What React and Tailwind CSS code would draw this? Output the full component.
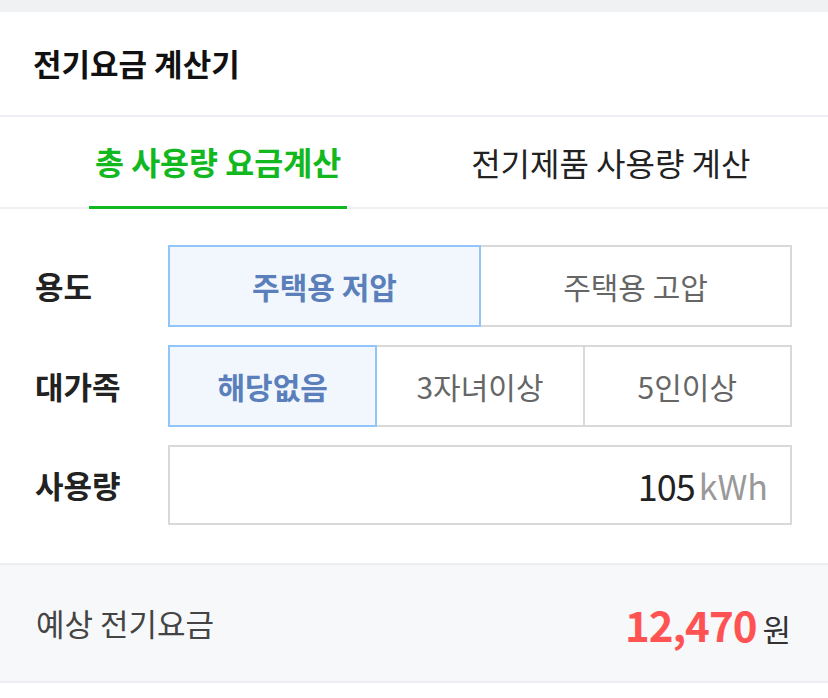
import { useState } from 'react';

const font = { fontFamily: '"Noto Sans CJK KR", "Noto Sans", sans-serif' };

function Segment({ options, value, onChange }) {
  return (
    <div className="flex flex-1">
      {options.map((opt, i) => {
        const on = opt === value;
        return (
          <button
            key={opt}
            onClick={() => onChange(opt)}
            className={
              'flex-1 h-[82px] flex items-center justify-center text-[30px] border-2 ' +
              (i > 0 ? '-ml-[2px] ' : '') +
              (on
                ? 'relative z-10 bg-[#f2f7fe] border-[#92c5f9] text-[#5b7fbb] font-bold'
                : 'bg-white border-[#d9d9d9] text-[#666666]')
            }
          >
            {opt}
          </button>
        );
      })}
    </div>
  );
}

export default function App() {
  const [tab, setTab] = useState(0);
  const [usage, setUsage] = useState('주택용 저압');
  const [family, setFamily] = useState('해당없음');

  return (
    <div className="w-[828px] h-[698px] bg-white overflow-hidden" style={font}>
      <div className="h-[12px] bg-[#f0f1f3]" />

      <header className="h-[105px] flex items-center px-[33px] border-b-2 border-[#eef0f3]">
        <h1 className="text-[31px] font-bold text-[#111]">전기요금 계산기</h1>
      </header>

      <nav className="h-[92px] flex border-b-2 border-[#eef0f3]">
        <button
          onClick={() => setTab(0)}
          className={
            'ml-[89px] px-[6px] h-[92px] -mb-[2px] flex items-center text-[31.5px] border-b-[3px] ' +
            (tab === 0 ? 'border-[#12b820] text-[#12b820] font-bold' : 'border-transparent text-[#222]')
          }
        >
          총 사용량 요금계산
        </button>
        <button
          onClick={() => setTab(1)}
          className={
            'ml-[118px] px-[6px] h-[92px] -mb-[2px] flex items-center text-[32px] border-b-[3px] ' +
            (tab === 1 ? 'border-[#12b820] text-[#12b820] font-bold' : 'border-transparent text-[#222]')
          }
        >
          전기제품 사용량 계산
        </button>
      </nav>

      <section className="pt-[36px] pb-[38px] pl-[35px] pr-[36px] flex flex-col gap-[18px]">
        <div className="flex items-center">
          <span className="w-[133px] text-[31px] font-bold text-[#222]">용도</span>
          <Segment options={['주택용 저압', '주택용 고압']} value={usage} onChange={setUsage} />
        </div>
        <div className="flex items-center">
          <span className="w-[133px] text-[31px] font-bold text-[#222]">대가족</span>
          <Segment options={['해당없음', '3자녀이상', '5인이상']} value={family} onChange={setFamily} />
        </div>
        <div className="flex items-center">
          <span className="w-[133px] text-[31px] font-bold text-[#222]">사용량</span>
          <div className="flex-1 h-[80px] border-2 border-[#d9d9d9] flex items-center justify-end pr-[22px] gap-[4px]">
            <span className="text-[36px] text-[#222] tracking-[-1px]">105</span>
            <span className="text-[34px] text-[#999]">kWh</span>
          </div>
        </div>
      </section>

      <div className="h-[120px] bg-[#f7f8fa] border-y-2 border-[#eceef1] flex items-center justify-between pl-[36px] pr-[37px]">
        <span className="text-[31px] text-[#444]">예상 전기요금</span>
        <span className="flex items-baseline gap-[6px]">
          <span className="text-[42px] font-bold text-[#ff5353] tracking-[-1px]">12,470</span>
          <span className="text-[31px] text-[#333]">원</span>
        </span>
      </div>
    </div>
  );
}
